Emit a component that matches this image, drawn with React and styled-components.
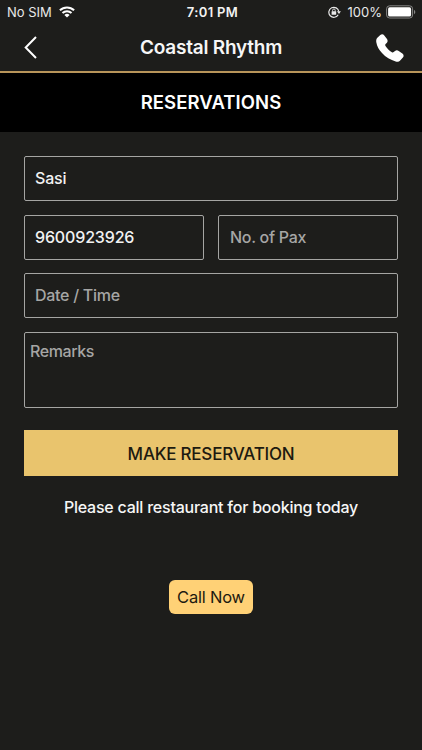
import React, { useState } from 'react';
import styled, { createGlobalStyle } from 'styled-components';

const GlobalStyle = createGlobalStyle`
  * {
    box-sizing: border-box;
  }

  body {
    margin: 0;
    background: #1d1d1b;
  }

  button, input, textarea {
    font-family: inherit;
  }
`;

const Screen = styled.div`
  width: 100%;
  min-height: 750px;
  display: flex;
  flex-direction: column;
  background: #1d1d1b;
  color: #fff;
  font-family: Inter, "Liberation Sans", sans-serif;
`;

const StatusBar = styled.div`
  height: 24px;
  display: grid;
  grid-template-columns: 1fr auto 1fr;
  align-items: center;
  padding: 0 6px 0 7px;
  font-size: 13px;
  line-height: 24px;
  color: #e9e9e9;
`;

const StatusGroup = styled.div`
  display: flex;
  align-items: center;
  justify-content: ${(props) => (props.$end ? 'flex-end' : 'flex-start')};
  gap: ${(props) => props.$gap}px;

  svg {
    flex: none;
  }
`;

const Percent = styled.span`
  margin-left: 3px;
`;

const Clock = styled.span`
  margin-left: 2px;
  font-weight: 600;
  font-size: 13px;
  letter-spacing: 0.35px;
  color: #f2f2f2;
`;

const Header = styled.header`
  height: 49px;
  display: grid;
  grid-template-columns: 64px 1fr 64px;
  align-items: center;
  border-bottom: 2px solid #b8955a;
`;

const Title = styled.h1`
  margin: 0;
  text-align: center;
  font-size: 19px;
  font-weight: 600;
  line-height: 24px;
  letter-spacing: -0.22px;
  color: #f6f6f6;
`;

const IconButton = styled.button`
  display: flex;
  align-items: center;
  height: 47px;
  padding: ${(props) => props.$padding};
  border: 0;
  background: none;
  color: #fff;
`;

const Banner = styled.h2`
  height: 59px;
  margin: 0;
  background: #000;
  text-align: center;
  font-size: 18.5px;
  font-weight: 600;
  line-height: 59px;
  letter-spacing: 0.08px;
`;

const Form = styled.form`
  display: grid;
  grid-template-columns: 180px 180px;
  justify-content: space-between;
  row-gap: 13.5px;
  padding: 24px 24px 0;
`;

const Field = styled.input`
  grid-column: ${(props) => (props.$half ? 'auto' : '1 / -1')};
  width: 100%;
  height: 45px;
  padding: 0 10px 1px;
  border: 1px solid #a5a5a3;
  border-radius: 2px;
  outline: none;
  background: transparent;
  color: #f2f2f2;
  font-size: 16px;
  font-weight: 500;
  letter-spacing: -0.15px;

  &::placeholder {
    color: #a6a6a5;
    letter-spacing: -0.28px;
    opacity: 1;
  }
`;

const PaxField = styled(Field)`
  padding-left: 11px;
`;

const Remarks = styled(Field)`
  height: 76px;
  display: block;
  padding: 8px 5px;
  line-height: 20px;
  resize: none;

  &::placeholder {
    letter-spacing: -0.4px;
  }
`;

const SubmitButton = styled.button`
  grid-column: 1 / -1;
  height: 45.5px;
  margin-top: 9px;
  padding: 2px 0 0;
  border: 0;
  background: #e9c46d;
  color: #1d1a10;
  font-size: 17px;
  font-weight: 500;
  letter-spacing: -0.22px;
`;

const Note = styled.p`
  margin: 21.5px 0 0;
  text-align: center;
  font-size: 16px;
  font-weight: 500;
  line-height: 20px;
  letter-spacing: -0.23px;
  color: #f6f6f6;
`;

const CallButton = styled.button`
  align-self: center;
  width: 84px;
  height: 34px;
  margin-top: 63px;
  padding: 0;
  border: 0;
  border-radius: 6px;
  background: #ffd176;
  color: #1d1a10;
  font-size: 16.5px;
  letter-spacing: -0.2px;
  white-space: nowrap;
`;

const WifiIcon = () => (
  <svg width="16" height="12" viewBox="0 0 16 12" fill="none" stroke="#fff" strokeWidth="2">
    <path d="M.9 4.3a10.2 10.2 0 0 1 14.2 0" />
    <path d="M3.5 7a6.5 6.5 0 0 1 9 0" />
    <path d="M8 11.6 5.4 9a3.8 3.8 0 0 1 5.2 0Z" fill="#fff" stroke="none" />
  </svg>
);

const RotationLockIcon = () => (
  <svg width="13" height="12" viewBox="0 0 13 12" fill="none" stroke="#e9e9e9">
    <path d="M10.2 8.8A5 5 0 1 1 10.8 5.5" strokeWidth="1.2" />
    <path d="M8.9 5.3h4L11 8Z" fill="#e9e9e9" stroke="none" />
    <rect x="3.6" y="5.2" width="4.6" height="3.6" rx=".4" fill="#e9e9e9" stroke="none" />
    <path d="M4.6 5.5V4.3a1.3 1.3 0 0 1 2.6 0v1.2" strokeWidth=".9" />
  </svg>
);

const BatteryIcon = () => (
  <svg width="30" height="14" viewBox="0 0 30 14">
    <rect x=".6" y=".8" width="26" height="12.2" rx="3" fill="none" stroke="#858584" />
    <rect x="2.1" y="2.3" width="23" height="9.2" rx="1.6" fill="#fff" />
    <path d="M28 5v4.2c.8-.4 1.3-1.2 1.3-2.1S28.8 5.4 28 5Z" fill="#858584" />
  </svg>
);

const BackIcon = () => (
  <svg width="14" height="23" viewBox="0 0 14 23" fill="none" stroke="#fff" strokeWidth="2">
    <path d="M12 1 1.7 11.5 12 22" />
  </svg>
);

const PhoneIcon = () => (
  <svg width="28" height="28" viewBox="0 0 28 28" fill="#fff">
    <path d="M1.6 3.6 4.3 1C5.7-.1 7.2.1 8.3 1.4L11 5.1C11.9 6.5 11.8 7.700 10.7 8.900L9.600 10.100C9.100 10.700 9.100 11.300 9.500 12C11.100 14.600 13.300 16.800 15.900 18.300C16.600 18.700 17.200 18.600 17.700 18.100L19 17C20.200 16 21.400 16 22.700 16.900L26.400 19.600C27.800 20.700 28 22.200 26.900 23.500L24.400 26.200C23.100 27.600 21.500 28 19.700 27.500C14.500 26.100 9.800 23.300 6 19.100C2.900 15.700 1 12.200.3 8.200C0 6.300.3 4.900 1.600 3.600Z" />
  </svg>
);

const App = () => {
  const [form, setForm] = useState({
    name: 'Sasi',
    phone: '9600923926',
    pax: '',
    date: '',
    remarks: '',
  });

  const handleChange = (e) => setForm({ ...form, [e.target.name]: e.target.value });
  const handleSubmit = (e) => e.preventDefault();

  return (
    <Screen>
      <GlobalStyle />
      <StatusBar>
        <StatusGroup $gap={7}>
          <span>No SIM</span>
          <WifiIcon />
        </StatusGroup>
        <Clock>7:01 PM</Clock>
        <StatusGroup $end $gap={4}>
          <RotationLockIcon />
          <Percent>100%</Percent>
          <BatteryIcon />
        </StatusGroup>
      </StatusBar>
      <Header>
        <IconButton type="button" aria-label="Back" $padding="0 0 0 24px">
          <BackIcon />
        </IconButton>
        <Title>Coastal Rhythm</Title>
        <IconButton type="button" aria-label="Call" $padding="0 0 0 18px">
          <PhoneIcon />
        </IconButton>
      </Header>
      <Banner>RESERVATIONS</Banner>
      <Form onSubmit={handleSubmit}>
        <Field name="name" value={form.name} onChange={handleChange} />
        <Field $half name="phone" value={form.phone} onChange={handleChange} />
        <PaxField $half name="pax" placeholder="No. of Pax" value={form.pax} onChange={handleChange} />
        <Field name="date" placeholder="Date / Time" value={form.date} onChange={handleChange} />
        <Remarks as="textarea" name="remarks" placeholder="Remarks" value={form.remarks} onChange={handleChange} />
        <SubmitButton type="submit">MAKE RESERVATION</SubmitButton>
      </Form>
      <Note>Please call restaurant for booking today</Note>
      <CallButton type="button">Call Now</CallButton>
    </Screen>
  );
};

export default App;
